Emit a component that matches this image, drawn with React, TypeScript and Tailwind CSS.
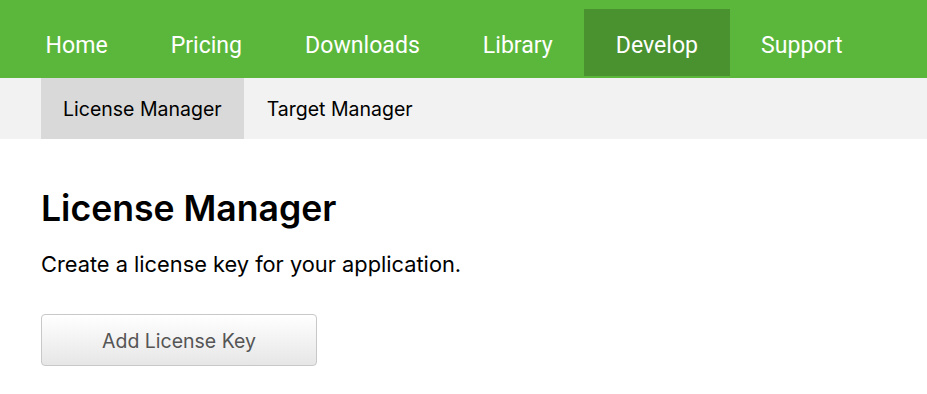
export default function App() {
  const items = ["Home", "Pricing", "Downloads", "Library", "Develop", "Support"];
  return (
    <div className="w-[927px] h-[394px] bg-white overflow-hidden" style={{ fontFamily: "Roboto, 'Liberation Sans', sans-serif" }}>
      <nav className="h-[78px] bg-[#5bb73b] flex items-start pl-[14px] pt-[9px]">
        {items.map((t) => (
          <a
            key={t}
            className={`h-[67px] flex items-center pt-[7px] px-[31.5px] text-[23.1px] text-white ${t === "Develop" ? "bg-[#49922f]" : ""}`}
          >
            {t}
          </a>
        ))}
      </nav>
      <div className="h-[61px] bg-[#f2f2f2] flex pl-[41px]" style={{ fontFamily: "Inter, sans-serif" }}>
        <a className="flex items-center pt-[3px] px-[22px] bg-[#d9d9d9] text-[19.5px] text-black">License Manager</a>
        <a className="flex items-center pt-[3px] px-[23px] text-[19.5px] text-black">Target Manager</a>
      </div>
      <main className="px-[41px]" style={{ fontFamily: "Inter, sans-serif" }}>
        <h1 className="mt-[48px] text-[35.6px] leading-[44px] font-semibold text-black">License Manager</h1>
        <p className="mt-[18px] text-[21.8px] leading-[30px] text-black">Create a license key for your application.</p>
        <button className="mt-[35px] w-[276px] h-[52px] pt-[3px] rounded-[4px] border border-[#c8c8c8] bg-gradient-to-b from-white to-[#e6e6e6] text-[19.5px] text-[#555]">
          Add License Key
        </button>
      </main>
    </div>
  );
}
